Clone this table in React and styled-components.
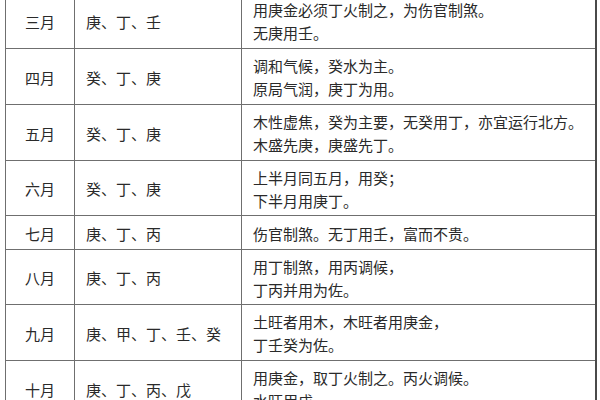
import React from "react";
import styled, { createGlobalStyle } from "styled-components";

const Global = createGlobalStyle`
  html, body { margin: 0; padding: 0; background: #fff; overflow: hidden; }
  body { font-family: "Noto Sans CJK SC", "Noto Sans", sans-serif; }
`;

const Page = styled.div`
  width: 600px;
  height: 400px;
  overflow: hidden;
  background: #fff;
`;

const Table = styled.div`
  margin: -7px 0 0 5px;
  width: 589px;
  border-left: 1px solid #6f6f6f;
  border-right: 2px solid #4a4a4a;
  color: #2a2a2a;
  font-size: 15px;
  font-weight: 400;
`;

const Row = styled.div`
  display: grid;
  grid-template-columns: 68px 167px 1fr;
  height: ${(p) => p.$h}px;
  border-bottom: 1px solid #6f6f6f;
  box-sizing: border-box;
`;

const Cell = styled.div`
  display: flex;
  flex-direction: column;
  justify-content: center;
  padding: 0 0 0 ${(p) => (p.$center ? 0 : 11)}px;
  align-items: ${(p) => (p.$center ? "center" : "flex-start")};
  border-left: ${(p) => (p.$first ? "none" : "1px solid #6f6f6f")};
  line-height: 23px;
  white-space: nowrap;
  overflow: hidden;
  padding-top: 1px;
`;

const rows = [
  { m: "三月", g: "庚、丁、壬", t: ["用庚金必须丁火制之，为伤官制煞。", "无庚用壬。"], h: 56 },
  { m: "四月", g: "癸、丁、庚", t: ["调和气候，癸水为主。", "原局气润，庚丁为用。"], h: 56 },
  { m: "五月", g: "癸、丁、庚", t: ["木性虚焦，癸为主要，无癸用丁，亦宜运行北方。", "木盛先庚，庚盛先丁。"], h: 56 },
  { m: "六月", g: "癸、丁、庚", t: ["上半月同五月，用癸；", "下半月用庚丁。"], h: 55 },
  { m: "七月", g: "庚、丁、丙", t: ["伤官制煞。无丁用壬，富而不贵。"], h: 34 },
  { m: "八月", g: "庚、丁、丙", t: ["用丁制煞，用丙调候，", "丁丙并用为佐。"], h: 55 },
  { m: "九月", g: "庚、甲、丁、壬、癸", t: ["土旺者用木，木旺者用庚金，", "丁壬癸为佐。"], h: 56 },
  { m: "十月", g: "庚、丁、丙、戊", t: ["用庚金，取丁火制之。丙火调候。", "水旺用戊。"], h: 56 },
];

export default function App() {
  return (
    <Page>
      <Global />
      <Table>
        {rows.map((r) => (
          <Row key={r.m} $h={r.h}>
            <Cell $first $center>{r.m}</Cell>
            <Cell>{r.g}</Cell>
            <Cell>
              {r.t.map((l) => (
                <span key={l}>{l}</span>
              ))}
            </Cell>
          </Row>
        ))}
      </Table>
    </Page>
  );
}
